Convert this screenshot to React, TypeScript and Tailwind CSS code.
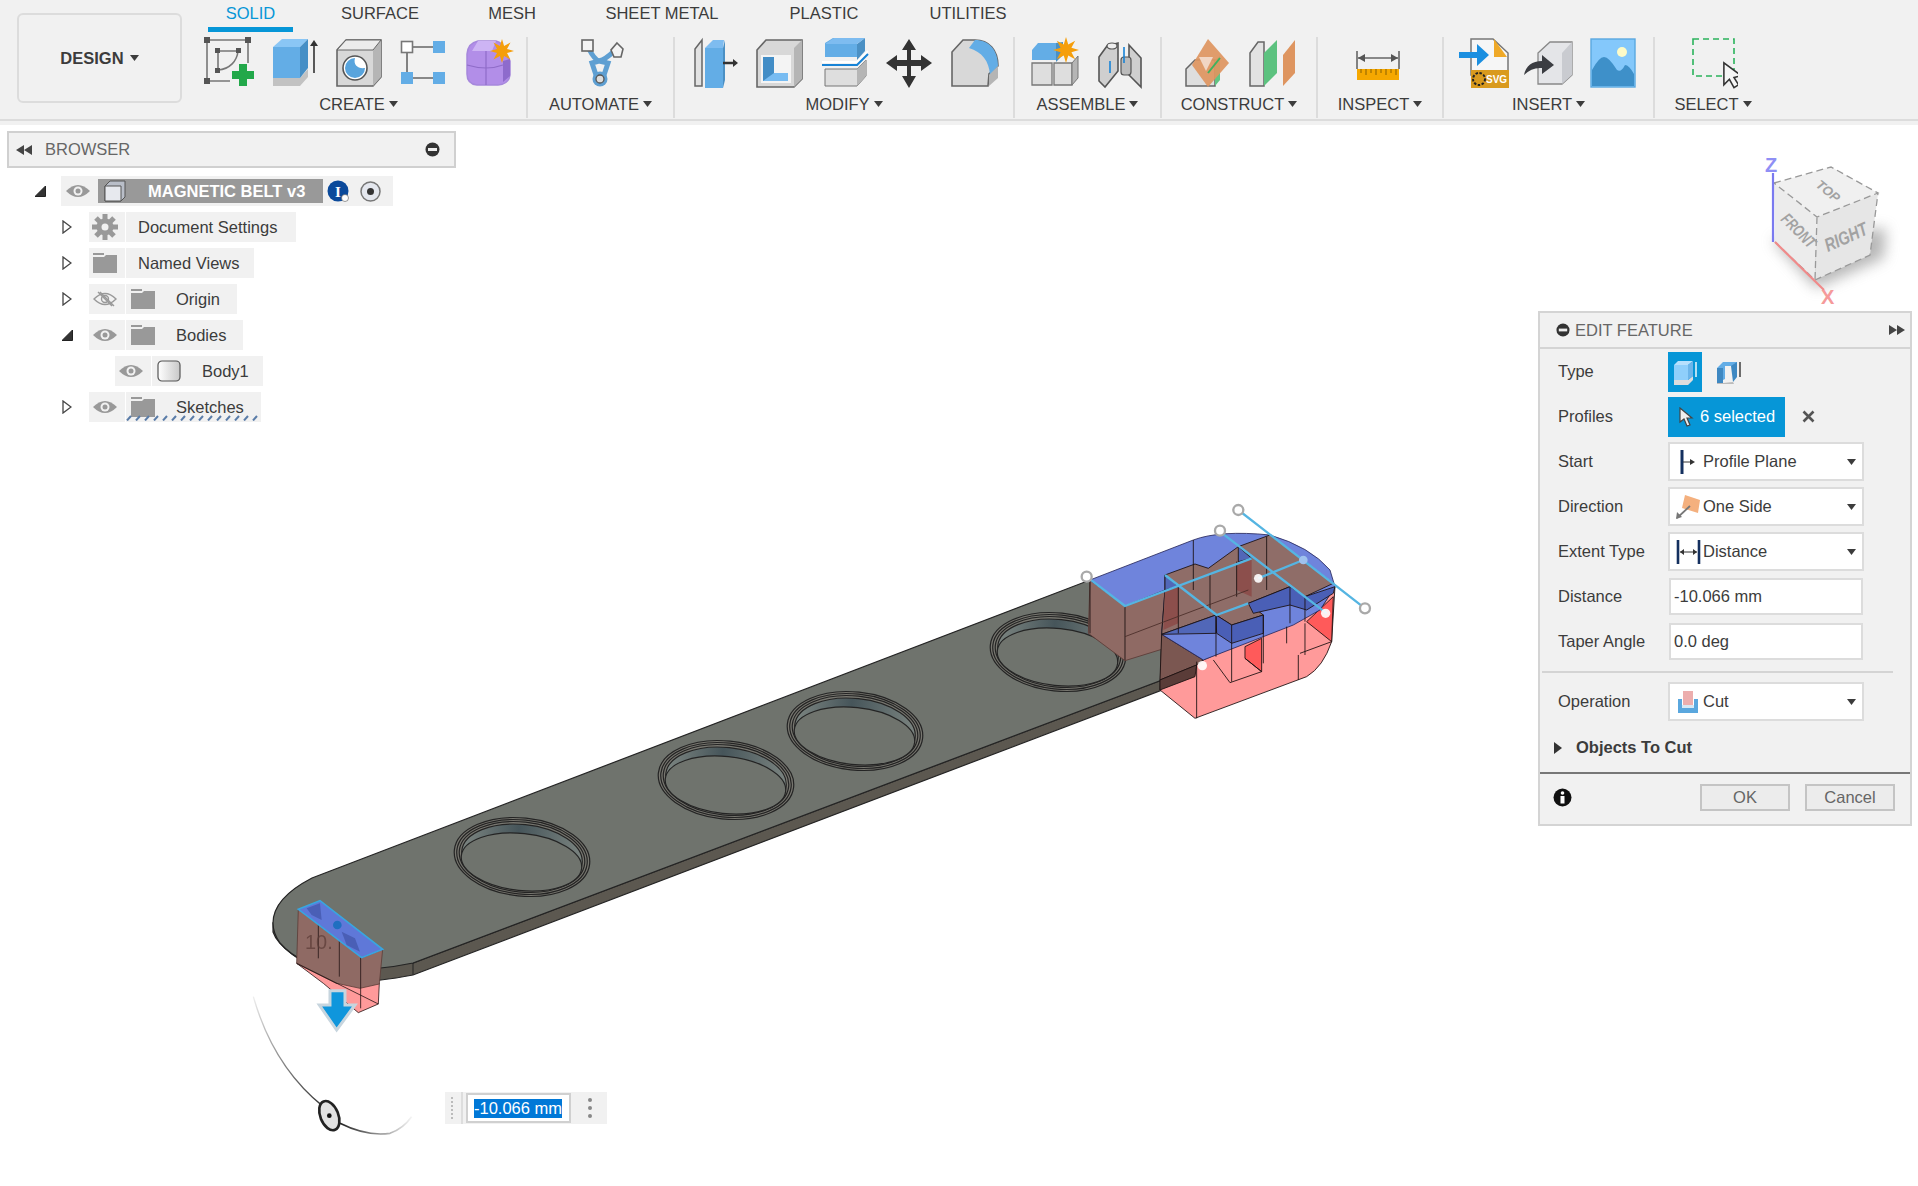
import type { ReactNode } from "react";

const Caret = ({ className = "" }: { className?: string }) => (
  <svg width="9" height="6" viewBox="0 0 9 6" className={className}>
    <path d="M0 0h9L4.5 6z" fill="#3c3c3c" />
  </svg>
);

const Ico = ({ children, w = 50 }: { children: ReactNode; w?: number }) => (
  <svg width={w} height="52" viewBox={`0 0 ${w} 52`} className="shrink-0">
    {children}
  </svg>
);

// ribbon icons, one px per unit
const SketchIcon = () => (
  <Ico>
    <path d="M3 3H44M3 3V44M44 3V26M3 44H26M14 14H34M14 14V33" stroke="#777" strokeWidth="1.6" fill="none" />
    <path d="M34 14C33 24 26 32 14 33" stroke="#777" strokeWidth="1.6" fill="none" />
    <g fill="#555">
      <rect x="0" y="0" width="6" height="6" /><rect x="41" y="0" width="6" height="6" /><rect x="0" y="41" width="6" height="6" />
      <rect x="11" y="11" width="5" height="5" /><rect x="32" y="11" width="5" height="5" /><rect x="11" y="31" width="5" height="5" />
    </g>
    <path d="M35 27h8v7h7v8h-7v7h-8v-7h-7v-8h7z" fill="#22a84a" />
  </Ico>
);
const ExtrudeIcon = () => (
  <Ico>
    <path d="M4 41h27l8-9v8l-8 9H4z" fill="#c2c2c2" />
    <path d="M4 10h27v31H4z" fill="#63ade6" />
    <path d="M4 10l9-8h26l-8 8z" fill="#8ac6f5" />
    <path d="M31 10l8-8v29l-8 10z" fill="#468fc6" />
    <path d="M45 36V7" stroke="#333" strokeWidth="1.6" />
    <path d="M41 9l4-6 4 6z" fill="#333" />
  </Ico>
);
const HoleIcon = () => (
  <Ico>
    <path d="M3 13L12 3h35v37l-8 9H3z" fill="#d8d8d8" stroke="#666" strokeWidth="1.6" />
    <path d="M39 13l8-10v37l-8 9z" fill="#b5b5b5" />
    <path d="M3 13h36L47 3H12z" fill="#ececec" stroke="#666" strokeWidth="1" />
    <circle cx="21" cy="31" r="12" fill="#fff" stroke="#555" strokeWidth="1.6" />
    <path d="M21 21a10 10 0 1 0 10 10c-7 1-12-3-10-10z" fill="#58a4dd" />
  </Ico>
);
const PatternIcon = () => (
  <Ico>
    <path d="M14 10H34M8 16V35M14 41H34" stroke="#666" strokeWidth="1.6" />
    <rect x="2.5" y="4.5" width="11" height="11" fill="#fff" stroke="#777" strokeWidth="1.6" />
    <rect x="34" y="4" width="12" height="12" fill="#63ade6" />
    <rect x="2" y="35" width="12" height="12" fill="#63ade6" />
    <rect x="34" y="35" width="12" height="12" fill="#63ade6" />
  </Ico>
);
const Star = ({ x, y, r = 11 }: { x: number; y: number; r?: number }) => {
  const pts = Array.from({ length: 16 }, (_, i) => {
    const a = (i * Math.PI) / 8;
    const d = i % 2 === 0 ? r : r * 0.45;
    return `${x + d * Math.cos(a)},${y + d * Math.sin(a)}`;
  }).join(" ");
  return <polygon points={pts} fill="#f59e0b" />;
};
const FormIcon = () => (
  <Ico>
    <path d="M3 17Q4 6 14 4h18q8 2 9 12l5 8v14q-1 9-12 10H13Q3 47 3 37z" fill="#b28ee8" stroke="#a688dc" strokeWidth="1.5" />
    <path d="M14 4h18l-4 10H8z" fill="#cdb4f4" />
    <path d="M3 28q20 6 36 0M22 14V48" stroke="#8f6cc8" strokeWidth="1.2" fill="none" />
    <path d="M39 24l7-2v17l-7 6z" fill="#8e6bcc" />
    <Star x={38} y={14} r={12} />
  </Ico>
);
const AutomateIcon = () => (
  <Ico>
    <path d="M13 12Q18 22 23 24 30 22 37 15M23 24L16 26 20 38H28L32 26z" stroke="#5e9fd2" strokeWidth="5" fill="none" />
    <rect x="6" y="3" width="11" height="11" fill="#f4f4f4" stroke="#666" strokeWidth="1.6" />
    <path d="M41 6l6 6-2 8h-7l-3-7z" fill="#f4f4f4" stroke="#666" strokeWidth="1.6" />
    <circle cx="24" cy="42" r="7.5" fill="#5e9fd2" />
    <circle cx="24" cy="42" r="4" fill="#ddd" stroke="#555" strokeWidth="1.3" />
  </Ico>
);
const PressPullIcon = () => (
  <Ico>
    <path d="M6 12L13 3v46H6z" fill="#e2e2e2" stroke="#666" strokeWidth="1.5" />
    <path d="M16 11h18v40H16z" fill="#63ade6" />
    <path d="M16 11l8-8h11l-1 8z" fill="#7ebcf0" />
    <path d="M34 11l2-8 0 40-2 8z" fill="#4b90c4" />
    <path d="M34 26H45" stroke="#333" strokeWidth="2.5" />
    <path d="M44 22l5 4-5 4z" fill="#333" />
  </Ico>
);
const FilletIcon = () => (
  <Ico>
    <path d="M3 13L12 3h36v39l-8 8H3z" fill="#d8d8d8" stroke="#666" strokeWidth="1.6" />
    <path d="M40 11l8-8v39l-8 8z" fill="#b5b5b5" />
    <rect x="7" y="18" width="30" height="28" fill="#f4f4f4" />
    <path d="M9 20h11v16h14v8H9z" fill="#78bcf2" />
    <path d="M9 20h11v16L9 44z" fill="#428dc6" />
  </Ico>
);
const ChamferIcon = () => (
  <Ico>
    <path d="M6 6l8-5h32l-8 5v14H6z" fill="#63ade6" />
    <path d="M38 7l8-6v13l-8 9z" fill="#4b90c4" />
    <path d="M6 7l9-6h31l-8 6z" fill="#7ebcf0" />
    <path d="M3 25H38L49 14" stroke="#fff" strokeWidth="2" fill="none" />
    <path d="M3 28H38L49 17" stroke="#1783d6" strokeWidth="2" fill="none" />
    <path d="M6 32H38L47 23V39L38 49H6z" fill="#dedede" stroke="#777" strokeWidth="1" />
    <path d="M38 32l9-9v16l-9 10z" fill="#b5b5b5" />
  </Ico>
);
const MoveIcon = () => (
  <Ico>
    <path d="M25 2l7 11h-5v10h10v-5l11 8-11 8v-5H27v10h5l-7 12-7-12h5V29H13v5L2 26l11-8v5h10V13h-5z" fill="#333" />
  </Ico>
);
const FaceIcon = () => (
  <Ico>
    <path d="M3 15L14 3h12c14 0 23 10 23 26l-9 8-1 12H3z" fill="#d8d8d8" stroke="#666" strokeWidth="1.6" />
    <path d="M26 3c14 0 23 10 23 26l-8 9C40 24 33 15 20 11z" fill="#63ade6" />
    <path d="M40 38l9-9v12l-9 8z" fill="#b5b5b5" />
  </Ico>
);
const NewComponentIcon = () => (
  <Ico>
    <path d="M2 13l6-7h18v17H2z" fill="#63ade6" />
    <path d="M26 6l7-1v13l-7 7z" fill="#4b90c4" />
    <path d="M2 26h20v22H2zM24 26h18v22H24z" fill="#dedede" stroke="#777" strokeWidth="1.3" />
    <path d="M42 26l6-7v22l-6 7z" fill="#b5b5b5" stroke="#777" strokeWidth="1" />
    <Star x={36} y={13} r={13} />
  </Ico>
);
const JointIcon = () => (
  <Ico>
    <path d="M4 20l8-11 11-3v28L10 50 4 44z" fill="#cfcfcf" stroke="#555" strokeWidth="1.6" />
    <ellipse cx="17" cy="9" rx="5" ry="3" fill="#eee" stroke="#555" strokeWidth="1.2" />
    <path d="M34 8l12 13v29L34 38z" fill="#cfcfcf" stroke="#555" strokeWidth="1.6" />
    <rect x="26" y="20" width="10" height="18" rx="3" fill="#bbb" stroke="#555" strokeWidth="1.2" />
    <path d="M29 10V26M15 24V36" stroke="#1783d6" strokeWidth="1.6" />
  </Ico>
);
const OffsetPlaneIcon = () => (
  <Ico>
    <path d="M4 32l9-9h20v26H4z" fill="#dedede" stroke="#666" strokeWidth="1.5" />
    <path d="M33 23l5-4v24l-5 6z" fill="#62c483" />
    <path d="M26 2l21 24-21 24L10 28z" fill="#de9560" opacity=".92" />
    <path d="M17 20h14L24 34z" fill="#f1d6c4" />
    <path d="M26 36L38 21" stroke="#3bb25e" strokeWidth="2" />
  </Ico>
);
const MidplaneIcon = () => (
  <Ico>
    <path d="M3 16l8-11h6v44H3z" fill="#e2e2e2" stroke="#666" strokeWidth="1.5" />
    <path d="M17 16L30 3v33L17 49z" fill="#5cc27f" />
    <path d="M36 18L48 3v33L36 49z" fill="#de9560" />
  </Ico>
);
const MeasureIcon = () => (
  <Ico>
    <path d="M2 14V32M44 14V32M3 21H43" stroke="#666" strokeWidth="1.6" />
    <path d="M3 21l7-4v8zM43 21l-7-4v8z" fill="#555" />
    <rect x="2" y="32" width="42" height="11" fill="#f6a800" />
    <path d="M6 32v4M11 32v6M16 32v4M21 32v6M26 32v4M31 32v6M36 32v4M41 32v6" stroke="#8a6000" strokeWidth="1" />
  </Ico>
);
const SvgIcon = () => (
  <Ico>
    <path d="M12 2H34L49 16V38H12z" fill="#f6f6f6" stroke="#777" strokeWidth="1.5" />
    <path d="M35 2l13 18H35z" fill="#efa928" />
    <path d="M0 15H18V7L30 18 18 29V21H0z" fill="#1b8fe0" />
    <rect x="12" y="33" width="38" height="18" fill="#d99a1e" />
    <circle cx="20" cy="42" r="6" fill="none" stroke="#222" strokeWidth="2" strokeDasharray="2.5 1.5" />
    <text x="27" y="46" fontSize="10" fontWeight="700" fill="#fff" fontFamily="Liberation Sans">SVG</text>
  </Ico>
);
const DecalIcon = () => (
  <Ico>
    <path d="M14 16L26 5h22v33l-10 9H14z" fill="#e4e5e8" stroke="#888" strokeWidth="1.3" />
    <path d="M38 16L48 5v33l-10 9z" fill="#c9cbd0" />
    <path d="M0 38Q3 24 18 24V18L30 28 18 37V31Q8 30 0 38z" fill="#3b3d42" />
  </Ico>
);
const CanvasIcon = () => (
  <Ico>
    <rect x="2" y="2" width="44" height="48" fill="#84c8fb" stroke="#5ba8e0" strokeWidth="1.4" />
    <circle cx="33" cy="15" r="5" fill="#fdfbc8" />
    <path d="M3 44V33Q10 20 15 20 20 20 28 33 32 36 36 28 40 28 45 37V49H3z" fill="#3e90c9" />
  </Ico>
);
const SelectIcon = () => (
  <Ico>
    <rect x="5" y="2" width="41" height="37" fill="none" stroke="#2bb35c" strokeWidth="1.6" strokeDasharray="6 4" />
    <path d="M37 27L37 51l6-6 5 9 5-3-5-8 8-2z" fill="#f6f6f6" stroke="#333" strokeWidth="1.7" transform="scale(.92) translate(2 1)" />
  </Ico>
);

function Group({ label, width, icons, last }: { label: string; width: number; icons?: ReactNode; last?: boolean }) {
  return (
    <div
      className={`flex flex-col items-center h-[81px] shrink-0 ${last ? "" : "border-r-2 border-[#dcdcdc]"}`}
      style={{ width }}
    >
      <div className="flex gap-[15px] h-[52px] justify-center">{icons}</div>
      <div className="mt-[5px] flex items-center gap-[4px] leading-[20px] text-[#3c3c3c]">
        {label}
        <Caret />
      </div>
    </div>
  );
}

function Ribbon() {
  const tabs = [
    { name: "SOLID", w: "w-[85px] ml-[17px]", active: true },
    { name: "SURFACE", w: "w-[174px]" },
    { name: "MESH", w: "w-[90px]" },
    { name: "SHEET METAL", w: "w-[210px]" },
    { name: "PLASTIC", w: "w-[114px]" },
    { name: "UTILITIES", w: "w-[174px]" },
  ];
  return (
    <div className="relative z-10 h-[125px] bg-[#f1f1f1]">
      <div className="flex h-[121px] border-b-2 border-[#dcdcdc]">
        <div className="w-[191px] pl-[17px] pt-[13px] shrink-0">
          <div className="w-[165px] h-[90px] rounded-[6px] border-2 border-[#dcdcdc] flex items-center justify-center gap-[6px] font-bold text-[#3c3c3c]">
            DESIGN <Caret />
          </div>
        </div>
        <div className="flex flex-col">
          <div className="flex h-[37px]">
            {tabs.map((t) => (
              <div key={t.name} className={`${t.w} text-center`}>
                <div className={`h-[32px] leading-[26px] ${t.active ? "text-[#0696d7] border-b-[5px] border-[#0696d7]" : "text-[#3c3c3c]"}`}>
                  {t.name}
                </div>
              </div>
            ))}
          </div>
          <div className="flex">
            <Group label="CREATE" width={337} icons={<><SketchIcon /><ExtrudeIcon /><HoleIcon /><PatternIcon /><FormIcon /></>} />
            <Group label="AUTOMATE" width={147} icons={<AutomateIcon />} />
            <Group label="MODIFY" width={340} icons={<><PressPullIcon /><FilletIcon /><ChamferIcon /><MoveIcon /><FaceIcon /></>} />
            <Group label="ASSEMBLE" width={147} icons={<><NewComponentIcon /><JointIcon /></>} />
            <Group label="CONSTRUCT" width={156} icons={<><OffsetPlaneIcon /><MidplaneIcon /></>} />
            <Group label="INSPECT" width={126} icons={<MeasureIcon />} />
            <Group label="INSERT" width={211} icons={<><SvgIcon /><DecalIcon /><CanvasIcon /></>} />
            <Group label="SELECT" width={116} last icons={<SelectIcon />} />
          </div>
        </div>
      </div>
    </div>
  );
}

const Eye = ({ off }: { off?: boolean }) => (
  <svg width="24" height="16" viewBox="0 0 24 16">
    {off ? (
      <g fill="none" stroke="#999" strokeWidth="1.4">
        <path d="M1 8q11-11 22 0-11 11-22 0z" />
        <circle cx="12" cy="8" r="3.5" />
        <path d="M5 1l14 14M7 1l14 14" />
      </g>
    ) : (
      <>
        <path d="M0 8q12-12 24 0-12 12-24 0z" fill="#999" />
        <circle cx="12" cy="8" r="4.5" fill="#f1f1f1" />
        <circle cx="12" cy="8" r="2.5" fill="#999" />
      </>
    )}
  </svg>
);
const Folder = () => (
  <svg width="24" height="20" viewBox="0 0 24 20">
    <path d="M0 0h11v2H0zM0 4h11l2-2h11v18H0z" fill="#999" />
  </svg>
);
const Gear = () => (
  <svg width="26" height="26" viewBox="0 0 26 26">
    <g stroke="#999" strokeWidth="5">
      <path d="M13 0V26M0 13H26M4 4L22 22M22 4L4 22" />
    </g>
    <circle cx="13" cy="13" r="8.5" fill="#999" />
    <circle cx="13" cy="13" r="3.5" fill="#f1f1f1" />
  </svg>
);
const Cube = () => (
  <svg width="22" height="22" viewBox="0 0 22 22">
    <path d="M1 6l5-5h15v16l-4 4H1z" fill="#b9bec8" stroke="#555" strokeWidth="1" />
    <path d="M1 6h16v15H1z" fill="#e7e9ee" stroke="#555" strokeWidth="1" />
  </svg>
);
const Cylinder = () => (
  <svg width="25" height="22" viewBox="0 0 25 22">
    <defs>
      <linearGradient id="cy" x1="0" x2="1" y1="0" y2="0">
        <stop offset="0" stopColor="#fff" />
        <stop offset="1" stopColor="#c8c8c8" />
      </linearGradient>
    </defs>
    <rect x="1" y="1" width="22" height="20" rx="4" fill="url(#cy)" stroke="#555" strokeWidth="1.2" />
  </svg>
);
const Expander = ({ open }: { open?: boolean }) =>
  open ? (
    <svg width="11" height="11" viewBox="0 0 11 11">
      <path d="M0 10.5h10.5V0z" fill="#333" stroke="#222" />
    </svg>
  ) : (
    <svg width="10" height="14" viewBox="0 0 10 14">
      <path d="M1 1l8 6-8 6z" fill="#fff" stroke="#444" strokeWidth="1.3" />
    </svg>
  );

function Row({ indent, open, first, second, text, textLeft, width, hatch }: { indent: number; open?: boolean; first: ReactNode; second?: ReactNode; text: string; textLeft: number; width: number; hatch?: boolean }) {
  return (
    <div className="flex items-center h-[30px] mb-[6px]" style={{ marginLeft: indent }}>
      <div className="w-[27px] flex justify-start">{open !== undefined && <Expander open={open} />}</div>
      <div className="relative flex items-center h-[30px] bg-[#f1f1f1]" style={{ width }}>
        <div className="w-[37px] h-full flex items-center justify-center border-r border-white pr-[4px]">{first}</div>
        {second && <div className="w-[32px] flex justify-center ml-[1px]">{second}</div>}
        <span className="absolute top-[5px] leading-[20px] text-[#3c3c3c] whitespace-nowrap" style={{ left: textLeft - 1 }}>{text}</span>
        {hatch && (
          <svg className="absolute left-[37px] bottom-[1px]" width="132" height="6">
            <defs>
              <pattern id="hatch" width="9" height="6" patternUnits="userSpaceOnUse">
                <path d="M1 5.5L5 1" stroke="#5a7ca8" strokeWidth="2" />
              </pattern>
            </defs>
            <rect width="132" height="6" fill="url(#hatch)" />
          </svg>
        )}
      </div>
    </div>
  );
}

function Browser() {
  return (
    <div className="absolute z-10 left-[7px] top-[131px] w-[449px]">
      <div className="h-[37px] bg-[#f1f1f1] border-2 border-[#d0d0d0] flex items-center pl-[7px] pr-[14px] text-[#666]">
        <svg width="16" height="10" viewBox="0 0 16 10"><path d="M8 0v10L0 5zM16 0v10L8 5z" fill="#444" /></svg>
        <span className="ml-[13px]">BROWSER</span>
        <svg className="ml-auto" width="15" height="15" viewBox="0 0 15 15"><circle cx="7.5" cy="7.5" r="7" fill="#333" /><rect x="3" y="6" width="9" height="3" fill="#eee" /></svg>
      </div>
      <div className="pt-[8px]">
        <div className="flex items-center h-[30px] mb-[6px] ml-[28px]">
          <div className="w-[26px]"><Expander open /></div>
          <div className="flex items-center w-[332px] h-[30px] bg-[#f1f1f1]">
            <div className="w-[37px] flex justify-center pr-[4px]"><Eye /></div>
            <div className="w-[225px] h-[24px] bg-[#999] flex items-center pl-[6px] shrink-0">
              <Cube />
              <span className="ml-[22px] font-bold text-white whitespace-nowrap">MAGNETIC BELT v3</span>
            </div>
            <svg className="ml-[4px]" width="23" height="23" viewBox="0 0 23 23">
              <circle cx="11" cy="11" r="10.5" fill="#0b4a9b" />
              <text x="11" y="16.5" fontSize="15" fontWeight="700" fill="#fff" textAnchor="middle" fontFamily="Liberation Serif">I</text>
              <circle cx="18" cy="18" r="3.5" fill="#fff" stroke="#555" strokeWidth=".6" />
            </svg>
            <svg className="ml-[10px]" width="21" height="21" viewBox="0 0 21 21">
              <circle cx="10.5" cy="10.5" r="9.5" fill="#e4e7ee" stroke="#777" strokeWidth="1.5" />
              <circle cx="10.5" cy="10.5" r="3.5" fill="#333" />
            </svg>
          </div>
        </div>
        <Row indent={55} open={false} first={<Gear />} text="Document Settings" textLeft={50} width={207} />
        <Row indent={55} open={false} first={<Folder />} text="Named Views" textLeft={50} width={165} />
        <Row indent={55} open={false} first={<Eye off />} second={<Folder />} text="Origin" textLeft={88} width={148} />
        <Row indent={55} open first={<Eye />} second={<Folder />} text="Bodies" textLeft={88} width={154} />
        <Row indent={81} first={<Eye />} second={<Cylinder />} text="Body1" textLeft={88} width={148} />
        <Row indent={55} open={false} first={<Eye />} second={<Folder />} text="Sketches" textLeft={88} width={172} hatch />
      </div>
    </div>
  );
}

const FieldRow = ({ label, children }: { label: string; children: ReactNode }) => (
  <div className="flex items-center h-[45px]">
    <span className="w-[110px] shrink-0 text-[#3c3c3c] whitespace-nowrap">{label}</span>
    {children}
  </div>
);

const Select = ({ icon, text }: { icon: ReactNode; text: string }) => (
  <div className="w-[196px] h-[39px] bg-white border-2 border-[#dcdcdc] flex items-center pl-[3px] pr-[6px] text-[#3c3c3c]">
    <div className="w-[30px] flex justify-center shrink-0">{icon}</div>
    <span>{text}</span>
    <Caret className="ml-auto" />
  </div>
);

const NumberInput = ({ value }: { value: string }) => (
  <div className="ml-[1px] w-[194px] h-[37px] bg-white border-2 border-[#dcdcdc] flex items-center pl-[3px] text-[#3c3c3c]">{value}</div>
);

function EditFeature() {
  return (
    <div className="absolute z-10 left-[1538px] top-[311px] w-[374px] h-[515px] bg-[#f1f1f1] border-2 border-[#d4d4d4]">
      <div className="h-[34px] flex items-center border-b-2 border-[#d4d4d4] pl-[16px] pr-[5px] text-[#666] box-content">
        <svg width="14" height="14" viewBox="0 0 15 15"><circle cx="7.5" cy="7.5" r="7" fill="#333" /><rect x="3" y="6" width="9" height="3" fill="#eee" /></svg>
        <span className="ml-[5px]">EDIT FEATURE</span>
        <svg className="ml-auto" width="16" height="10" viewBox="0 0 16 10"><path d="M0 0v10l8-5zM8 0v10l8-5z" fill="#444" /></svg>
      </div>
      <div className="pl-[18px]">
        <FieldRow label="Type">
          <div className="w-[34px] h-[40px] bg-[#0696d7] flex items-center justify-center">
            <svg width="24" height="26" viewBox="0 0 24 26">
              <path d="M1 21h14l5-4v4l-5 5H1z" fill="#ddd" />
              <path d="M1 6h14v15H1z" fill="#8fcffb" />
              <path d="M1 6l4-4h15l-5 4z" fill="#b7e0fd" />
              <path d="M15 6l5-4v15l-5 4z" fill="#6cb5ea" />
              <path d="M23 18V3" stroke="#fff" strokeWidth="1.4" />
            </svg>
          </div>
          <svg className="ml-[14px]" width="26" height="26" viewBox="0 0 26 26">
            <path d="M1 24V9l6-6h14v15h-4V7H9v13z" fill="#63ade6" />
            <path d="M1 9h6v15H1zM15 7l6-4v15l-4 5z" fill="#3e88c2" />
            <path d="M1 24h6l10-1 1 2H1z" fill="#bbb" />
            <path d="M24 18V3" stroke="#333" strokeWidth="1.4" />
          </svg>
        </FieldRow>
        <FieldRow label="Profiles">
          <div className="w-[117px] h-[40px] bg-[#0696d7] flex items-center pl-[11px] text-white">
            <svg width="16" height="20" viewBox="0 0 16 20"><path d="M1 1v14l4-3 3 7 3-1-3-7h5z" fill="#eee" stroke="#444" strokeWidth="1.2" /></svg>
            <span className="ml-[5px]">6 selected</span>
          </div>
          <svg className="ml-[17px]" width="13" height="13" viewBox="0 0 13 13"><path d="M1.5 1.5l10 10M11.5 1.5l-10 10" stroke="#555" strokeWidth="2.6" /></svg>
        </FieldRow>
        <FieldRow label="Start">
          <Select text="Profile Plane" icon={<svg width="16" height="24" viewBox="0 0 16 24"><path d="M2 0V24" stroke="#14305f" strokeWidth="3" /><path d="M3 12H11" stroke="#333" /><path d="M10 9l5 3-5 3z" fill="#333" /></svg>} />
        </FieldRow>
        <FieldRow label="Direction">
          <Select text="One Side" icon={<svg width="25" height="24" viewBox="0 0 25 24"><path d="M9 0l15 5-2 13-16-5z" fill="#f4b07e" /><path d="M1 23L14 11" stroke="#777" strokeWidth="1.8" /><path d="M0 24l1-7 5 5z" fill="#777" /></svg>} />
        </FieldRow>
        <FieldRow label="Extent Type">
          <Select text="Distance" icon={<svg width="25" height="24" viewBox="0 0 25 24"><path d="M2 0V24M23 0V24" stroke="#14305f" strokeWidth="2.6" /><path d="M4 12H21" stroke="#333" /><path d="M4 12l4-3v6zM21 12l-4-3v6z" fill="#333" /></svg>} />
        </FieldRow>
        <FieldRow label="Distance"><NumberInput value="-10.066 mm" /></FieldRow>
        <FieldRow label="Taper Angle"><NumberInput value="0.0 deg" /></FieldRow>
        <div className="mt-[7px] mb-[6px] -ml-[16px] w-[351px] h-[2px] bg-[#d4d4d4]" />
        <FieldRow label="Operation">
          <Select text="Cut" icon={<svg width="22" height="22" viewBox="0 0 22 22"><rect x="6" y="0" width="10" height="14" fill="#ecaeae" /><path d="M1 8h4v9h12V8h4v14H1z" fill="#5aa7de" /><rect x="5" y="14" width="12" height="3" fill="#d8e8f4" /></svg>} />
        </FieldRow>
        <div className="flex items-center h-[45px] -ml-[4px] mt-[1px]">
          <svg width="8" height="12" viewBox="0 0 8 12"><path d="M0 0l8 6-8 6z" fill="#333" /></svg>
          <span className="ml-[14px] font-bold text-[#3c3c3c]">Objects To Cut</span>
        </div>
      </div>
      <div className="mt-[2px] h-[2px] bg-[#777]" />
      <div className="flex items-center h-[47px] pl-[13px]">
        <svg width="19" height="19" viewBox="0 0 19 19">
          <circle cx="9.5" cy="9.5" r="9" fill="#111" />
          <circle cx="9.5" cy="5" r="1.8" fill="#fff" />
          <rect x="7.5" y="8" width="4" height="7.5" fill="#fff" />
        </svg>
        <div className="ml-[128px] w-[90px] h-[27px] bg-[#ececec] border-2 border-[#c4c4c4] text-[#666] flex items-center justify-center">OK</div>
        <div className="ml-[15px] w-[90px] h-[27px] bg-[#ececec] border-2 border-[#c4c4c4] text-[#666] flex items-center justify-center">Cancel</div>
      </div>
    </div>
  );
}

const holes = [
  [522, 857],
  [726, 780],
  [855, 731],
  [1058, 652],
];

function Hole({ cx, cy }: { cx: number; cy: number }) {
  return (
    <g transform={`rotate(6 ${cx} ${cy})`} stroke="#242424" strokeWidth="1.2">
      <ellipse cx={cx} cy={cy} rx="68" ry="39" fill="#77766f" />
      <ellipse cx={cx} cy={cy} rx="65.5" ry="37" fill="#77766f" />
      <ellipse cx={cx} cy={cy} rx="63" ry="35" fill="#77766f" />
      <ellipse cx={cx} cy={cy} rx="60.5" ry="32.5" fill="url(#crescent)" />
      <ellipse cx={cx} cy={cy + 5} rx="60.5" ry="28.5" fill="#6f736d" />
    </g>
  );
}

function Model() {
  return (
    <svg className="absolute left-0 top-0" width="1918" height="1186" viewBox="0 0 1918 1186">
      <defs>
        <filter id="bl" x="-40%" y="-40%" width="180%" height="180%"><feGaussianBlur stdDeviation="7" /></filter>
        <linearGradient id="crescent" x1="0" x2="1" y1="0" y2="0">
          <stop offset="0" stopColor="#7b8480" />
          <stop offset=".45" stopColor="#46555a" />
          <stop offset="1" stopColor="#7b8480" />
        </linearGradient>
        <linearGradient id="fadeIn" gradientUnits="userSpaceOnUse" x1="40" y1="410" x2="250" y2="740">
          <stop offset="0" stopColor="#eee" />
          <stop offset="1" stopColor="#333" />
        </linearGradient>
        <linearGradient id="fadeOut" gradientUnits="userSpaceOnUse" x1="300" y1="790" x2="515" y2="780">
          <stop offset="0" stopColor="#222" />
          <stop offset="1" stopColor="#f4f4f4" />
        </linearGradient>
      </defs>

      {/* view cube */}
      <path d="M1772 240l44 48 68-30 2-30z" fill="#888" opacity=".6" filter="url(#bl)" />
      <path d="M1774 183l57-16 47 26-61 24z" fill="#f0f0f0" />
      <path d="M1774 183l43 34-2 63-40-38z" fill="#ececec" />
      <path d="M1817 217l61-24-8 62-55 25z" fill="#e6e6e6" />
      <path d="M1774 183l57-16 47 26-61 24-43-34M1775 242l40 38 55-25 8-62M1817 217l-2 63" fill="none" stroke="#999" strokeWidth="1.3" strokeDasharray="7 4" />
      <text fontFamily="Liberation Sans" fontSize="13" fontWeight="700" fontStyle="italic" fill="#a2a2a2" transform="translate(1815 186) rotate(40)">TOP</text>
      <text fontFamily="Liberation Sans" fontSize="15" fontWeight="700" fontStyle="italic" fill="#a2a2a2" transform="translate(1780 220) rotate(45) scale(.8 1.1)">FRONT</text>
      <text fontFamily="Liberation Sans" fontSize="17" fontWeight="700" fontStyle="italic" fill="#a2a2a2" transform="translate(1828 252) rotate(-24) scale(.85 1.1)">RIGHT</text>
      <path d="M1773 173V242" stroke="#7a7af0" strokeWidth="2.2" />
      <path d="M1775 242L1824 290" stroke="#f08a8a" strokeWidth="2.2" />
      <text x="1765" y="172" fontFamily="Liberation Sans" fontSize="20" fontWeight="700" fill="#8f8ff5">Z</text>
      <text x="1821" y="304" fontFamily="Liberation Sans" fontSize="20" fontWeight="700" fill="#f59a9a">X</text>

      {/* belt */}
      <path d="M273 923V932Q280 953 337 980 360 985 413 975L1162 690V680L413 963z" fill="#5c5850" stroke="#242424" strokeWidth="1.2" />
      <path d="M273 923C273 905 287 891 312 878L1090 580 1225 600 1162 680 413 963Q380 970 340 970 300 966 280 943 273 933 273 923z" fill="#6f736d" stroke="#242424" strokeWidth="1.2" />
      <path d="M413 963V975" stroke="#242424" />
      {holes.map(([x, y]) => <Hole key={x} cx={x} cy={y} />)}

      {/* left pocket, coordinates taken from the crop */}
      <g transform="translate(240 860) scale(.3333)" stroke="#241414" strokeWidth="2.4">
        <path d="M170 310L290 370H418L415 432 355 458 250 370z" fill="#ff9a9a" />
        <path d="M175 148L365 293 428 268 418 372 360 385 290 370 170 310z" fill="#8f6a64" stroke="#5b3b36" />
        <path d="M235 155V295M298 230V350M362 293V445M170 310L415 432" fill="none" />
        <path d="M175 148L240 122 428 268 365 293z" fill="#5f78d8" stroke="#38a6e0" strokeWidth="5" />
        <path d="M200 145L240 130 245 180 215 165zM305 215L345 235 360 275 320 255z" fill="#4a5fb6" stroke="none" />
        <circle cx="292" cy="195" r="13" fill="#1f6fc0" stroke="none" />
        <text x="195" y="268" fontFamily="Liberation Sans" fontSize="60" fill="#5b3b36" stroke="none" opacity=".7">10.</text>
        <path d="M270 392H315V435H345L290 510 238 435H270z" fill="#0f96dc" stroke="#c7d5de" strokeWidth="9" />
      </g>

      {/* right end */}
      <g transform="translate(1060 490) scale(.3333)" stroke="#1b1010" strokeWidth="2.6" strokeLinejoin="round">
        <path d="M300 600L405 685 740 560Q790 530 815 455L825 290 780 360 430 510 305 433z" fill="#ff9a9a" />
        <path d="M555 470L605 445V545L555 505zM740 395L820 320 815 455z" fill="#ff5a5a" />
        <path d="M90 270L195 348 315 300 305 433V478L195 512 85 430z" fill="#8f6a64" stroke="#5b3b36" />
        <path d="M305 433L430 510 410 525 300 570z" fill="#7b5751" />
        <path d="M300 570L410 525 405 560 300 600z" fill="#5a3c38" />
        <path d="M90 270L400 150Q480 120 630 135 750 170 810 240L825 290 780 360 700 405 430 510 305 433 315 300 195 348z" fill="#6f84dc" stroke="#2c2c60" />
        <path d="M315 255L405 222 445 235 535 170 630 135 820 280 735 320 690 290 565 340 610 375 515 405 468 375 305 433 315 300z" fill="#8f6d68" />
        <path d="M315 300L355 290V400L310 420zM530 215L575 205V320L530 300z" fill="#8c4f4c" stroke="none" />
        <path d="M315 255V300L355 290zM535 170L575 205 535 215z" fill="#5167b8" />
        <path d="M468 375L515 405 610 375 610 430 515 460 470 430zM565 340L690 290 735 320 825 290 820 310 740 360 690 345 580 370z" fill="#4a5fb6" />
        <path d="M305 433L468 375V430z" fill="#5167b8" />
        <path d="M400 150V300M355 290V430M450 250V360M530 215V320M620 140V300M690 290V400M735 320V395M468 375V500M515 405V575M610 375V520M410 515V685M715 495V570M735 400V495M195 348V510M460 510L510 578 605 545M680 410V460M555 505L605 545M720 490L815 455M90 270V430" fill="none" />
        <path d="M195 440L300 400 565 300" fill="none" stroke="#4a2d29" />
        <g fill="none" stroke="#55b5e2" strokeWidth="7">
          <path d="M535 60L915 355M480 125L800 370M80 260L195 348 575 205M315 255L470 375 565 340M595 265L730 210" />
        </g>
        <g fill="#fff" stroke="#a9a9a9" strokeWidth="7">
          <circle cx="535" cy="60" r="15" /><circle cx="480" cy="122" r="15" /><circle cx="80" cy="260" r="15" /><circle cx="915" cy="355" r="15" />
        </g>
        <g fill="#fff" stroke="none" opacity=".9">
          <circle cx="595" cy="265" r="13" /><circle cx="797" cy="370" r="14" /><circle cx="427" cy="527" r="14" />
        </g>
        <circle cx="730" cy="210" r="13" fill="#9fc2ee" stroke="none" />
      </g>

      {/* drag dial */}
      <g transform="translate(240 860) scale(.3333)" fill="none">
        <path d="M40 410Q100 620 250 740" stroke="url(#fadeIn)" strokeWidth="4" />
        <path d="M300 790Q380 830 450 820 490 805 515 770" stroke="url(#fadeOut)" strokeWidth="5" />
        <ellipse cx="268" cy="767" rx="27" ry="46" transform="rotate(-22 268 767)" fill="#e2e2e2" stroke="#222" strokeWidth="8" />
        <circle cx="268" cy="767" r="7" fill="#111" />
      </g>
    </svg>
  );
}

function DistanceInput() {
  return (
    <div className="absolute z-10 left-[445px] top-[1092px] w-[162px] h-[32px] bg-[#f1f1f1] flex items-center">
      <div className="w-[10px] h-full ml-[3px] flex flex-col justify-center">
        <div className="h-[22px] border-l-2 border-dotted border-[#bbb] ml-[3px]" />
      </div>
      <div className="w-[2px] h-full bg-[#ddd] ml-[3px]" />
      <div className="ml-[3px] w-[105px] h-[30px] bg-white border-2 border-[#d0d0d0] flex items-center pl-[6px]">
        <span className="bg-[#0078d7] text-white leading-[19px] whitespace-nowrap">-10.066 mm</span>
      </div>
      <div className="ml-[17px] flex flex-col gap-[4px]">
        <div className="w-[4px] h-[4px] rounded-full bg-[#888]" />
        <div className="w-[4px] h-[4px] rounded-full bg-[#888]" />
        <div className="w-[4px] h-[4px] rounded-full bg-[#888]" />
      </div>
    </div>
  );
}

export default function App() {
  return (
    <div className="relative w-[1918px] h-[1186px] overflow-hidden bg-white text-[16.5px] font-['Liberation_Sans',sans-serif]">
      <Ribbon />
      <Model />
      <Browser />
      <EditFeature />
      <DistanceInput />
    </div>
  );
}
